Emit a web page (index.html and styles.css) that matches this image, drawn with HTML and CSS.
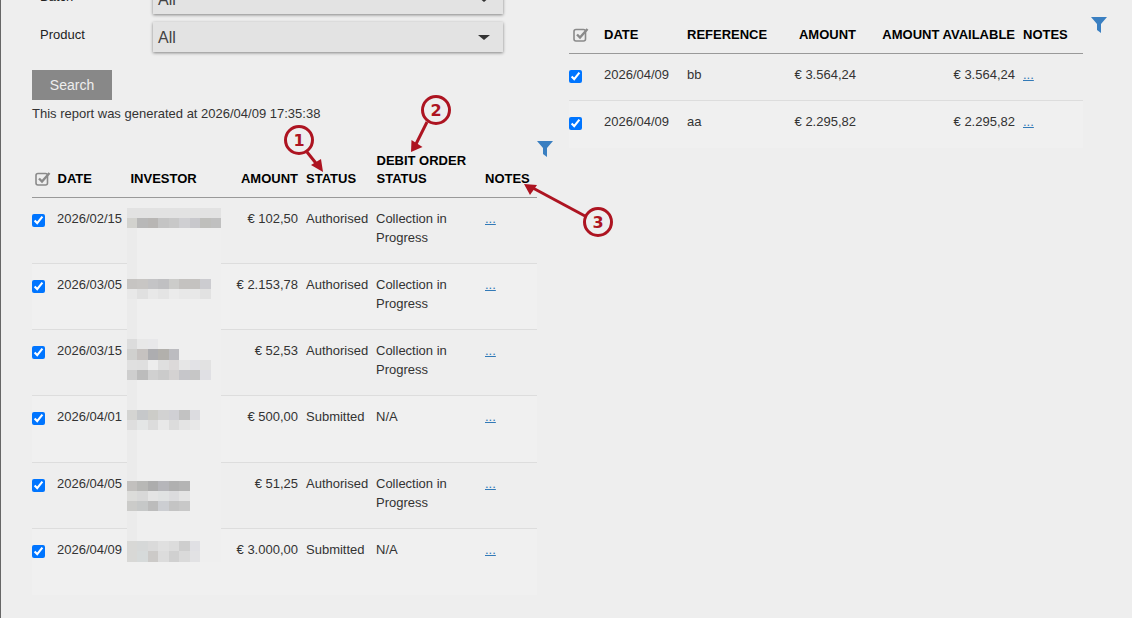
FILE: index.html
```html
<!DOCTYPE html>
<html>
<head>
    <title>Report</title>
    <link rel="stylesheet" href="styles.css">
</head>
<body>
    <div class="page">
        <div class="left-column">
            <div class="filter-row">
                <label class="filter-label">Batch</label>
                <div class="select-box"><span>All</span><span class="caret"></span></div>
            </div>
            <div class="filter-row">
                <label class="filter-label">Product</label>
                <div class="select-box"><span>All</span><span class="caret"></span></div>
            </div>
            <button class="search-button">Search</button>
            <p class="report-time">This report was generated at 2026/04/09 17:35:38</p>

            <div class="table-row investor-row">
                <div class="table-wrap">
                    <table class="report-table investor-table">
                        <colgroup>
                            <col class="col-a1"><col class="col-a2"><col class="col-a3"><col class="col-a4">
                            <col class="col-a5"><col class="col-a6"><col class="col-a7">
                        </colgroup>
                        <thead>
                            <tr>
                                <th class="check-cell"><svg class="check-all" viewBox="0 0 16 15"><rect x="1" y="2.5" width="11.5" height="11.5" rx="2" fill="none" stroke="#8a8a8a" stroke-width="1.6"/><path d="M4 7.5l3 3 7.5-8.5" fill="none" stroke="#8a8a8a" stroke-width="2.4"/></svg></th>
                                <th>DATE</th>
                                <th>INVESTOR</th>
                                <th class="num">AMOUNT</th>
                                <th>STATUS</th>
                                <th>DEBIT ORDER STATUS</th>
                                <th>NOTES</th>
                            </tr>
                        </thead>
                        <tbody>
                            <tr>
                                <td class="check-cell"><input type="checkbox" checked></td>
                                <td>2026/02/15</td><td></td><td class="num">€ 102,50</td>
                                <td>Authorised</td><td>Collection in Progress</td><td><a href="#">...</a></td>
                            </tr>
                            <tr>
                                <td class="check-cell"><input type="checkbox" checked></td>
                                <td>2026/03/05</td><td></td><td class="num">€ 2.153,78</td>
                                <td>Authorised</td><td>Collection in Progress</td><td><a href="#">...</a></td>
                            </tr>
                            <tr>
                                <td class="check-cell"><input type="checkbox" checked></td>
                                <td>2026/03/15</td><td></td><td class="num">€ 52,53</td>
                                <td>Authorised</td><td>Collection in Progress</td><td><a href="#">...</a></td>
                            </tr>
                            <tr class="tall-row">
                                <td class="check-cell"><input type="checkbox" checked></td>
                                <td>2026/04/01</td><td></td><td class="num">€ 500,00</td>
                                <td>Submitted</td><td>N/A</td><td><a href="#">...</a></td>
                            </tr>
                            <tr>
                                <td class="check-cell"><input type="checkbox" checked></td>
                                <td>2026/04/05</td><td></td><td class="num">€ 51,25</td>
                                <td>Authorised</td><td>Collection in Progress</td><td><a href="#">...</a></td>
                            </tr>
                            <tr>
                                <td class="check-cell"><input type="checkbox" checked></td>
                                <td>2026/04/09</td><td></td><td class="num">€ 3.000,00</td>
                                <td>Submitted</td><td>N/A</td><td><a href="#">...</a></td>
                            </tr>
                        </tbody>
                    </table>
                    <!-- pixelated names, one cell = one block -->
                    <svg class="redacted" viewBox="0 0 9 35" preserveAspectRatio="none" shape-rendering="crispEdges">
                        <rect width="9" height="35" fill="#efefef"/>
                        <rect width="1" height="35" fill="#ebebeb"/>
                        <g fill="#e2e2e2"><rect width="9" height="1"/></g>
                        <rect y="1" width="1" height="1" fill="#d2d2ce"/><rect x="1" y="1" width="1" height="1" fill="#b8b8b8"/><rect x="2" y="1" width="1" height="1" fill="#b8b6b4"/><rect x="3" y="1" width="1" height="1" fill="#c4c4c4"/><rect x="4" y="1" width="1" height="1" fill="#c8c8c8"/><rect x="5" y="1" width="1" height="1" fill="#cfcfd2"/><rect x="6" y="1" width="1" height="1" fill="#c8c8cc"/><rect x="7" y="1" width="1" height="1" fill="#bfbfbc"/><rect x="8" y="1" width="1" height="1" fill="#c0c0c0"/>

                        <rect y="7" width="1" height="1" fill="#c6c4c2"/><rect x="1" y="7" width="1" height="1" fill="#c8c6c4"/><rect x="2" y="7" width="1" height="1" fill="#c4c4c6"/><rect x="3" y="7" width="1" height="1" fill="#c0c0c2"/><rect x="4" y="7" width="1" height="1" fill="#ccccca"/><rect x="5" y="7" width="1" height="1" fill="#c4c2c0"/><rect x="6" y="7" width="1" height="1" fill="#c4c2c0"/><rect x="7" y="7" width="1" height="1" fill="#ccccd0"/>
                        <rect y="8" width="1" height="1" fill="#e8e8e8"/><rect x="1" y="8" width="1" height="1" fill="#e0e0e0"/><rect x="2" y="8" width="1" height="1" fill="#e8e8e8"/><rect x="3" y="8" width="1" height="1" fill="#e4e4e4"/><rect x="4" y="8" width="1" height="1" fill="#ebebeb"/><rect x="5" y="8" width="1" height="1" fill="#e8e8e8"/><rect x="6" y="8" width="1" height="1" fill="#e8e8e8"/><rect x="7" y="8" width="1" height="1" fill="#e2e2e2"/>

                        <rect y="13" width="1" height="1" fill="#dcdcdc"/><rect x="1" y="13" width="1" height="1" fill="#e8e8e8"/><rect x="2" y="13" width="1" height="1" fill="#e8e8ea"/>
                        <rect y="14" width="1" height="1" fill="#d0d0ce"/><rect x="1" y="14" width="1" height="1" fill="#c6c2c0"/><rect x="2" y="14" width="1" height="1" fill="#adadb0"/><rect x="3" y="14" width="1" height="1" fill="#b2b0ac"/><rect x="4" y="14" width="1" height="1" fill="#bcbcc0"/>
                        <rect y="15" width="1" height="1" fill="#e0e0e0"/><rect x="1" y="15" width="1" height="1" fill="#dfdfdf"/><rect x="2" y="15" width="1" height="1" fill="#ededed"/><rect x="3" y="15" width="1" height="1" fill="#dfdfdf"/><rect x="4" y="15" width="1" height="1" fill="#dcd9d9"/><rect x="5" y="15" width="1" height="1" fill="#e6e6e6"/><rect x="6" y="15" width="1" height="1" fill="#e2e2e6"/><rect x="7" y="15" width="1" height="1" fill="#e2e2e2"/>
                        <rect y="16" width="1" height="1" fill="#cecece"/><rect x="1" y="16" width="1" height="1" fill="#bcbcbc"/><rect x="2" y="16" width="1" height="1" fill="#d0d0d0"/><rect x="3" y="16" width="1" height="1" fill="#cbcbcb"/><rect x="4" y="16" width="1" height="1" fill="#d4d2d2"/><rect x="5" y="16" width="1" height="1" fill="#c6c6ca"/><rect x="6" y="16" width="1" height="1" fill="#c6c6c6"/><rect x="7" y="16" width="1" height="1" fill="#e0e0e4"/>

                        <rect y="20" width="1" height="1" fill="#d4d4d2"/><rect x="1" y="20" width="1" height="1" fill="#c6c8ca"/><rect x="2" y="20" width="1" height="1" fill="#ccccc8"/><rect x="3" y="20" width="1" height="1" fill="#d2d2d2"/><rect x="4" y="20" width="1" height="1" fill="#d0d0d4"/><rect x="5" y="20" width="1" height="1" fill="#c2c2c2"/><rect x="6" y="20" width="1" height="1" fill="#dcdce0"/>
                        <rect y="21" width="1" height="1" fill="#dedede"/><rect x="1" y="21" width="1" height="1" fill="#e4e6e6"/><rect x="2" y="21" width="1" height="1" fill="#dcdcdc"/><rect x="3" y="21" width="1" height="1" fill="#e8e8e8"/><rect x="4" y="21" width="1" height="1" fill="#dcdcdc"/><rect x="5" y="21" width="1" height="1" fill="#e4e4e4"/><rect x="6" y="21" width="1" height="1" fill="#e8e8e8"/>

                        <rect y="27" width="1" height="1" fill="#c2c0be"/><rect x="1" y="27" width="1" height="1" fill="#b8b8b6"/><rect x="2" y="27" width="1" height="1" fill="#adadad"/><rect x="3" y="27" width="1" height="1" fill="#b6b6ba"/><rect x="4" y="27" width="1" height="1" fill="#b0b0b0"/><rect x="5" y="27" width="1" height="1" fill="#b4b4b4"/>
                        <rect y="28" width="1" height="1" fill="#dcdcda"/><rect x="1" y="28" width="1" height="1" fill="#d8d8d8"/><rect x="2" y="28" width="1" height="1" fill="#e4e4e4"/><rect x="3" y="28" width="1" height="1" fill="#e0e2e2"/><rect x="4" y="28" width="1" height="1" fill="#dcdcde"/><rect x="5" y="28" width="1" height="1" fill="#e4e4e4"/>
                        <rect y="29" width="1" height="1" fill="#cbcbc9"/><rect x="1" y="29" width="1" height="1" fill="#c6c8c8"/><rect x="2" y="29" width="1" height="1" fill="#bcbcbc"/><rect x="3" y="29" width="1" height="1" fill="#ccced2"/><rect x="4" y="29" width="1" height="1" fill="#c4c4c4"/><rect x="5" y="29" width="1" height="1" fill="#c8c8c8"/>

                        <rect y="33" width="1" height="1" fill="#d8d8d6"/><rect x="1" y="33" width="1" height="1" fill="#d6d8d8"/><rect x="2" y="33" width="1" height="1" fill="#dadada"/><rect x="3" y="33" width="1" height="1" fill="#e0e0e0"/><rect x="4" y="33" width="1" height="1" fill="#dcdcdc"/><rect x="5" y="33" width="1" height="1" fill="#cecece"/><rect x="6" y="33" width="1" height="1" fill="#e0e0e4"/>
                        <rect y="34" width="1" height="1" fill="#d8d8d6"/><rect x="1" y="34" width="1" height="1" fill="#d6dada"/><rect x="2" y="34" width="1" height="1" fill="#cccac8"/><rect x="3" y="34" width="1" height="1" fill="#dcdcdc"/><rect x="4" y="34" width="1" height="1" fill="#d0d0d0"/><rect x="5" y="34" width="1" height="1" fill="#dadada"/><rect x="6" y="34" width="1" height="1" fill="#e2e2e4"/>
                    </svg>
                </div>
                <svg class="filter-icon" viewBox="0 0 16 16"><path d="M0 0h16l-6 7v9l-4-3V7z" fill="#3a7fc1"/></svg>
            </div>
        </div>

        <div class="right-column">
            <div class="table-row">
                <table class="report-table credit-table">
                    <colgroup>
                        <col class="col-b1"><col class="col-b2"><col class="col-b3"><col class="col-b4">
                        <col class="col-b5"><col class="col-b6">
                    </colgroup>
                    <thead>
                        <tr>
                            <th class="check-cell"><svg class="check-all" viewBox="0 0 16 15"><rect x="1" y="2.5" width="11.5" height="11.5" rx="2" fill="none" stroke="#8a8a8a" stroke-width="1.6"/><path d="M4 7.5l3 3 7.5-8.5" fill="none" stroke="#8a8a8a" stroke-width="2.4"/></svg></th>
                            <th>DATE</th>
                            <th>REFERENCE</th>
                            <th class="num">AMOUNT</th>
                            <th class="num">AMOUNT AVAILABLE</th>
                            <th>NOTES</th>
                        </tr>
                    </thead>
                    <tbody>
                        <tr>
                            <td class="check-cell"><input type="checkbox" checked></td>
                            <td>2026/04/09</td><td>bb</td><td class="num">€ 3.564,24</td>
                            <td class="num">€ 3.564,24</td><td><a href="#">...</a></td>
                        </tr>
                        <tr>
                            <td class="check-cell"><input type="checkbox" checked></td>
                            <td>2026/04/09</td><td>aa</td><td class="num">€ 2.295,82</td>
                            <td class="num">€ 2.295,82</td><td><a href="#">...</a></td>
                        </tr>
                    </tbody>
                </table>
                <svg class="filter-icon" viewBox="0 0 16 16"><path d="M0 0h16l-6 7v9l-4-3V7z" fill="#3a7fc1"/></svg>
            </div>
        </div>
    </div>

    <!-- callouts drawn on top of the screenshot -->
    <svg class="callouts" viewBox="0 0 1132 618">
        <g fill="none" stroke="#ad1421" stroke-width="3">
            <circle cx="299" cy="140" r="13.5"/>
            <circle cx="436" cy="110" r="13.5"/>
            <circle cx="598" cy="222" r="13.5"/>
            <path d="M307 152L319 167"/>
            <path d="M427 122L415 146"/>
            <path d="M585 216L531 187"/>
        </g>
        <g fill="#ad1421">
            <path d="M323 172L311 165L321 159Z"/>
            <path d="M411 152L411.5 140L422.5 147Z"/>
            <path d="M524 184L537 185L530 195Z"/>
        </g>
        <g class="callout-num" fill="#ad1421" text-anchor="middle">
            <text x="299" y="146">1</text>
            <text x="436" y="116">2</text>
            <text x="598" y="228">3</text>
        </g>
    </svg>
</body>
</html>
```

FILE: styles.css
```css
html, body {
    height: 100%;
}

body {
    margin: 0;
    background-color: #eeeeee;
    border-left: 1px solid #666;
    overflow: hidden;
    position: relative;
    color: #333;
    font-family: "Liberation Sans", Arial, sans-serif;
    font-size: 13px;
    line-height: 19px;
}

.page {
    display: flex;
    gap: 32px;
    margin-top: -16px;
    padding-left: 31px;
}

.left-column {
    width: 505px;
    flex: none;
}

.right-column {
    width: 540px;
    flex: none;
    padding-top: 33px;
}

.filter-row {
    display: flex;
    align-items: center;
    height: 30px;
    margin-bottom: 8px;
}

.filter-label {
    width: 113px;
    flex: none;
    padding-left: 8px;
    padding-bottom: 6px;
    color: #222;
}

.select-box {
    width: 350px;
    height: 30px;
    display: flex;
    align-items: center;
    justify-content: space-between;
    box-sizing: border-box;
    padding: 0 13px 0 5px;
    background-color: #e3e3e3;
    box-shadow: 0 1px 3px rgba(0,0,0,0.45);
    font-size: 16px;
    color: #444;
}

.caret {
    width: 0;
    height: 0;
    border-left: 6px solid transparent;
    border-right: 6px solid transparent;
    border-top: 5px solid #333;
}

.search-button {
    display: block;
    width: 80px;
    height: 30px;
    margin-top: 18px;
    padding: 0;
    border: none;
    background-color: #888;
    color: #eee;
    font-family: "Liberation Sans", Arial, sans-serif;
    font-size: 14px;
}

.report-time {
    margin: 4px 0 0;
}

.table-row {
    display: flex;
    align-items: flex-start;
}

.investor-row {
    margin-top: 18px;
}

.table-wrap {
    position: relative;
    margin-top: 11px;
}

.report-table {
    border-collapse: collapse;
    table-layout: fixed;
}

.investor-table {
    width: 505px;
}

.credit-table {
    width: 514px;
    margin-top: 9px;
    margin-right: 8px;
}

.col-a1 { width: 21px; }
.col-a2 { width: 73px; }
.col-a3 { width: 90px; }
.col-a4 { width: 86px; }
.col-a5 { width: 70px; }
.col-a6 { width: 109px; }
.col-a7 { width: 56px; }

.col-b1 { width: 31px; }
.col-b2 { width: 83px; }
.col-b3 { width: 92px; }
.col-b4 { width: 85px; }
.col-b5 { width: 159px; }
.col-b6 { width: 64px; }

.report-table th {
    padding: 0 4px 9px;
    border-bottom: 1px solid #999;
    color: #000;
    font-weight: bold;
    line-height: 18px;
    text-align: left;
    vertical-align: bottom;
}

.investor-table th:nth-child(2),
.investor-table th:nth-child(3),
.investor-table th:nth-child(6) {
    padding-left: 4.5px;
}

.report-table td {
    padding: 11px 4px 0;
    border-top: 1px solid #ddd;
    vertical-align: top;
}

.investor-table tbody tr {
    height: 66px;
}

.investor-table tbody tr.tall-row {
    height: 67px;
}

.credit-table tbody tr {
    height: 47px;
}

.report-table tbody tr:nth-child(even) {
    background-color: #f0f0f0;
}

.report-table .num {
    text-align: right;
}

.report-table .check-cell {
    padding-left: 0;
    padding-right: 0;
}

.report-table th.check-cell {
    padding-left: 3px;
}

.credit-table th.check-cell {
    padding-left: 4px;
}

.check-all {
    display: block;
    width: 16px;
    height: 15px;
    margin-bottom: 2px;
}

.report-table input {
    display: block;
    width: 13px;
    height: 13px;
    margin: 5px 0 0;
}

.report-table a {
    color: #337ab7;
}

.redacted {
    position: absolute;
    left: 95px;
    top: 56px;
    width: 94px;
    height: 353.5px;
}

.filter-icon {
    width: 16px;
    height: 16px;
    flex: none;
}

.callouts {
    position: absolute;
    left: -1px;
    top: 0;
    width: 1132px;
    height: 618px;
}

.callout-num {
    font-family: "DejaVu Sans", sans-serif;
    font-size: 16px;
    font-weight: bold;
}
```
